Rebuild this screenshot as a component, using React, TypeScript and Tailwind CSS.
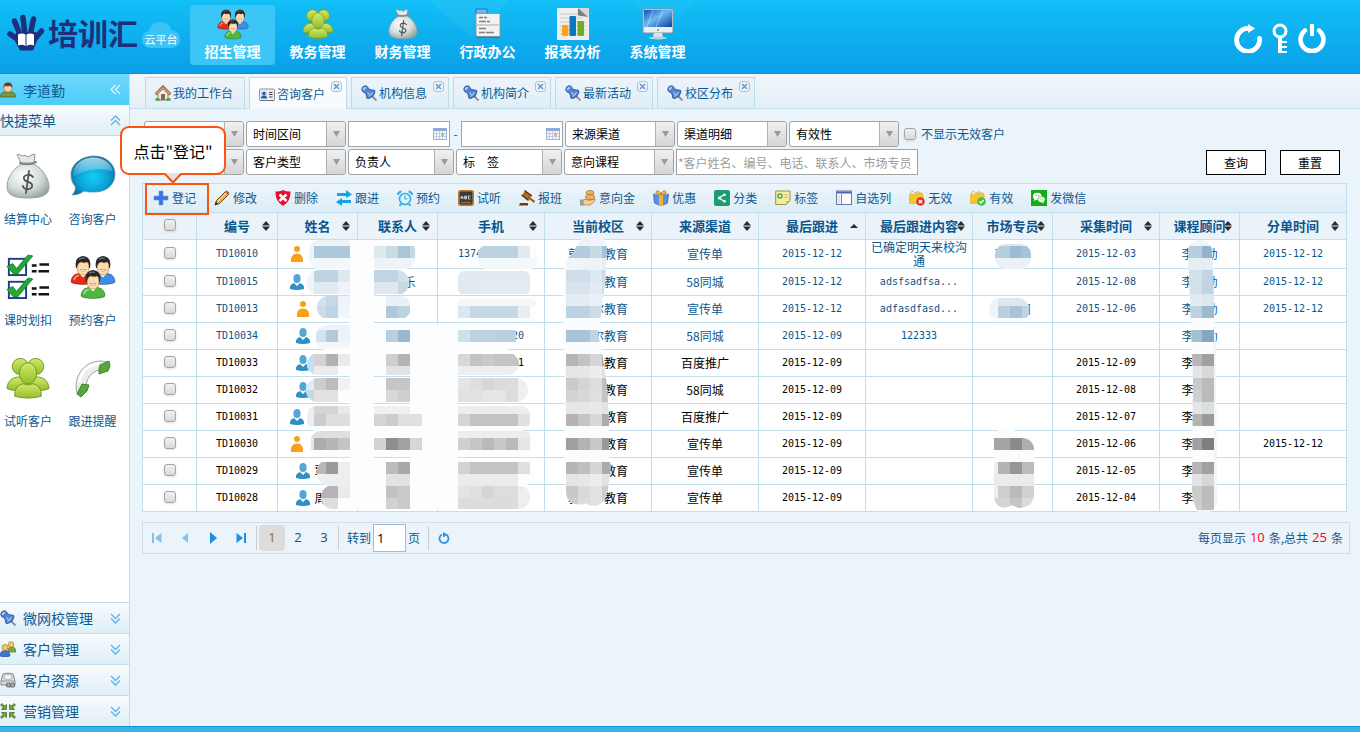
import type { ReactNode } from "react";

const FONT = "font-['Noto_Sans_CJK_SC','Liberation_Sans',sans-serif]";
const MONO = "font-['DejaVu_Sans_Mono',monospace] text-[10px]";

type IconProps = { className?: string };

/* ---------- large icons ---------- */

function MoneyBag({ className }: IconProps) {
  return (
    <svg viewBox="0 0 44 48" className={className} aria-hidden="true">
      <defs>
        <radialGradient id="bag" cx="0.4" cy="0.35" r="0.75">
          <stop offset="0" stopColor="#ffffff" />
          <stop offset="0.55" stopColor="#d5dcda" />
          <stop offset="1" stopColor="#8f9c99" />
        </radialGradient>
      </defs>
      <path d="M15 11 L11 3 Q13 1 16 4 Q19 2 22 5 Q26 2 29 2 L28 11 Z" fill="#e4e8e7" stroke="#8b9896" />
      <path d="M16 12 C6 17 1 27 1 35 C1 43 8 46 22 46 C36 46 43 43 43 35 C43 27 37 17 28 12 Z" fill="url(#bag)" stroke="#96a3a0" />
      <path d="M14 11 Q22 14 30 10" stroke="#7d8987" strokeWidth="2" fill="none" strokeLinecap="round" />
      <path d="M27 25 Q25 22 21 23 Q17 24 18 27 Q19 29 22 30 Q27 31 26 35 Q24 38 20 37 Q17 36 17 34 M23 19 L20 41" stroke="#4c5754" strokeWidth="1.800" fill="none" strokeLinecap="round" />
    </svg>
  );
}

function Head({ x, y, shirt }: { x: number; y: number; shirt: string }) {
  return (
    <g transform={`translate(${x} ${y})`}>
      <path d="M0 26 Q0 19 7 17.500 L17 17.500 Q24 19 24 26 Q23 28 12 28.500 Q1 28 0 26 Z" fill={shirt} stroke="#00000066" strokeWidth="0.800" />
      <path d="M3 24 Q4 20 8 19.500" stroke="#ffffff88" strokeWidth="1.500" fill="none" />
      <path d="M8 17.500 L12 21.500 L16 17.500 Z" fill="#fff" />
      <path d="M5 12 Q3 1 12 0 Q21 1 19 12 Z" fill="#25252b" />
      <path d="M6 11 Q7 6.500 10 6 Q13 7.500 16 6 Q18 7 18 11 Q18 19 12 19 Q6 19 6 11 Z" fill="#fcdcab" stroke="#9a6a34" strokeWidth="0.500" />
      <path d="M9 13.500 Q12 17.500 15 13.500 Z" fill="#fff" stroke="#a86b36" strokeWidth="0.500" />
      <path d="M8 3.500 Q11 1.500 14 2.500" stroke="#74747e" strokeWidth="1.200" fill="none" />
    </g>
  );
}

function PeopleTrio({ className }: IconProps) {
  return (
    <svg viewBox="0 0 46 44" className={className} aria-hidden="true">
      <Head x={1} y={1} shirt="#ea2a12" />
      <Head x={21} y={1} shirt="#3f8be8" />
      <Head x={11} y={15} shirt="#4db83a" />
    </svg>
  );
}

function GreenPeople({ className }: IconProps) {
  return (
    <svg viewBox="0 0 46 44" className={className} aria-hidden="true">
      <defs>
        <linearGradient id="lime" x1="0" y1="0" x2="0" y2="1">
          <stop offset="0" stopColor="#d3e86c" />
          <stop offset="1" stopColor="#93be2b" />
        </linearGradient>
      </defs>
      <g fill="url(#lime)" stroke="#6f991c" strokeWidth="1">
        <circle cx="15" cy="10" r="8.500" />
        <circle cx="31" cy="10" r="8.500" />
        <path d="M1 33 Q2 22 12 21 L34 21 Q44 22 45 33 Q40 36 23 35 Q6 36 1 33 Z" />
        <ellipse cx="23" cy="17" rx="9" ry="11" />
        <path d="M9 41 Q9 29 18 28 Q23 31 28 28 Q37 29 37 41 Q23 45 9 41 Z" />
      </g>
    </svg>
  );
}

function ChatBubble({ className }: IconProps) {
  return (
    <svg viewBox="0 0 46 42" className={className} aria-hidden="true">
      <defs>
        <radialGradient id="chat" cx="0.5" cy="0.55" r="0.6">
          <stop offset="0" stopColor="#14cdf8" />
          <stop offset="0.6" stopColor="#0aa0d4" />
          <stop offset="1" stopColor="#04608f" />
        </radialGradient>
        <linearGradient id="chat-gloss" x1="0" y1="0" x2="0" y2="1">
          <stop offset="0" stopColor="#ffffff" stopOpacity="0.65" />
          <stop offset="1" stopColor="#ffffff" stopOpacity="0.05" />
        </linearGradient>
      </defs>
      <path d="M24 1 C37 1 45 10 45 19 C45 30 36 37 25 37 C20 37 17 37 14 36 C10 39 6 40 2 40 C5 37 6 34 5 31 C2 28 1 24 1 19 C1 10 11 1 24 1 Z" fill="url(#chat)" stroke="#5d93ae" strokeWidth="0.800" />
      <path d="M24 2.500 C34 2.500 42 9 43 17 C34 12 14 14 3 22 C2 10 12 2.500 24 2.500 Z" fill="url(#chat-gloss)" />
    </svg>
  );
}

function CheckList({ className }: IconProps) {
  return (
    <svg viewBox="0 0 46 46" className={className} aria-hidden="true">
      {[0, 24].map((y) => (
        <g key={y} transform={`translate(0 ${y})`}>
          <rect x="3" y="4" width="18" height="17" fill="#fff" stroke="#1c3f86" strokeWidth="2" />
          <path d="M1 12 L7 9 L11 14 L23 0 L28 1 L12 20 L8 20 Z" fill="#23a837" stroke="#0d7a20" strokeWidth="0.800" />
          <path d="M27 11 h5 M35 10 h10 M27 17 h5 M34 17 h11" stroke="#151515" strokeWidth="2.600" />
        </g>
      ))}
    </svg>
  );
}

function Handset({ className }: IconProps) {
  return (
    <svg viewBox="0 0 44 44" className={className} aria-hidden="true">
      <path d="M6 37 C2 22 12 5 30 5 L37 6 L32 14 C24 13 15 20 15 31 L13 38 Z" fill="#eceeee" stroke="#9ea3a3" strokeWidth="1" />
      <path d="M8 26 C10 15 18 8.500 28 7.500" fill="none" stroke="#fff" strokeWidth="3" />
      <path d="M29 9 L38 5 L39 10 L37 15 L28 18 L28 13 Z" fill="#57a83b" stroke="#3d7d28" strokeWidth="0.900" />
      <path d="M11 28 L18 29 L16 35 L10 41 L6 38 Z" fill="#57a83b" stroke="#3d7d28" strokeWidth="0.900" />
    </svg>
  );
}

function MenuDoc({ className }: IconProps) {
  return (
    <svg viewBox="0 0 32 32" className={className} aria-hidden="true">
      <path d="M4 1 h11 v5 h-11 Z" fill="#6fb6ee" stroke="#2372bd" />
      <path d="M4 6 H28 V30 H4 Z" fill="#00000033" />
      <rect x="4" y="5.500" width="24" height="23" fill="#f2f2f2" stroke="#8b8b8b" strokeWidth="0.800" />
      <path d="M5 17 h22" stroke="#a9a9a9" />
      <path d="M7 9.500 h4 M12 9.500 h3 M7 13.500 h7 M15 13.500 h3 M7 20.500 h7 M7 24.500 h6 M14 24.500 h8" stroke="#808080" strokeWidth="1.500" />
    </svg>
  );
}

function ChartDoc({ className }: IconProps) {
  return (
    <svg viewBox="0 0 32 32" className={className} aria-hidden="true">
      <path d="M0 0 H22 L32 9 V32 H0 Z" fill="#eeeeee" />
      <path d="M22 0 H32 V9 Z" fill="#d8d8d8" />
      <path d="M3 6 h18 M3 10 h22 M3 14 h26 M3 18 h26 M3 22 h26 M3 26 h26" stroke="#cccccc" />
      <path d="M21 0 L31 9 L21 7.500 Z" fill="#7e7e7e" />
      <rect x="5" y="17" width="6.500" height="11" rx="1" fill="#f9a61c" />
      <rect x="12.500" y="8" width="6.500" height="20" rx="1" fill="#0b78bd" />
      <rect x="20.500" y="13" width="6.500" height="15" rx="1" fill="#6cae22" />
    </svg>
  );
}

function Monitor({ className }: IconProps) {
  return (
    <svg viewBox="0 0 32 32" className={className} aria-hidden="true">
      <defs>
        <linearGradient id="screen" x1="0" y1="0" x2="1" y2="1">
          <stop offset="0" stopColor="#134fb4" />
          <stop offset="0.450" stopColor="#6eb9f3" />
          <stop offset="1" stopColor="#0b3c9b" />
        </linearGradient>
      </defs>
      <rect x="1" y="1" width="30" height="24" rx="1" fill="#eceff1" stroke="#878f94" />
      <rect x="2" y="2" width="28" height="17" fill="url(#screen)" />
      <path d="M11 2 L5 19 M21 2 L14 19" stroke="#ffffff66" />
      <path d="M12 25 h8 l1 4 h-10 Z" fill="#dfe4e7" />
      <ellipse cx="16" cy="30" rx="9" ry="1.500" fill="#b9d3de" />
      <circle cx="16" cy="22" r="1" fill="#888" />
    </svg>
  );
}

/* ---------- small icons ---------- */

function Svg16({ children }: { children: ReactNode }) {
  return (
    <svg viewBox="0 0 16 16" className="size-4 shrink-0" aria-hidden="true">
      {children}
    </svg>
  );
}

const PinIcon = () => (
  <Svg16>
    <path d="M11 11 L15.500 15.500" stroke="#8b8b8b" strokeWidth="1.800" />
    <path d="M0.800 5 Q0.500 2 3 1 Q6 0 7 2.500 L7.500 4 L11 5 Q14.500 4.500 14 7 Q13 12 8 13.500 Q5 14 5.500 11 L4.500 8 Q2 8 0.800 5 Z" fill="#4f83d3" stroke="#264e99" strokeWidth="0.800" />
    <path d="M2.500 5 Q2.500 3 5 2.500" stroke="#bcd6fa" strokeWidth="1.400" fill="none" />
    <path d="M6.500 7.500 L8.500 9.500 M11.500 7 Q10 10.500 7.500 11.500" stroke="#a9c8f6" strokeWidth="1.100" fill="none" />
  </Svg16>
);
const HouseIcon = () => (
  <Svg16>
    <path d="M3 8 L8 3.500 L13 8 V15 H3 Z" fill="#f1eee9" stroke="#7d7d7d" />
    <path d="M0.500 9.500 L8 2 L15.500 9.500" fill="none" stroke="#8d6a4a" strokeWidth="3" />
    <path d="M1 9 L8 2.500 L15 9" fill="none" stroke="#d9a676" strokeWidth="1.200" />
    <rect x="6" y="9" width="4" height="6" fill="#84684d" />
    <path d="M0.500 14.500 h4 M11.500 14.500 h4" stroke="#4e9e30" strokeWidth="2.500" />
  </Svg16>
);
const CardIcon = () => (
  <Svg16>
    <rect x="0.500" y="3" width="15" height="11.500" rx="1" fill="#eceef1" stroke="#8d949c" />
    <path d="M1 14.500 h14" stroke="#6b7178" />
    <rect x="2" y="5" width="6" height="7.500" fill="#c9dbf0" />
    <circle cx="5" cy="7.500" r="1.700" fill="#2b5ba6" />
    <path d="M2 12.500 Q2 9.500 5 9.500 Q8 9.500 8 12.500 Z" fill="#2b5ba6" />
    <path d="M10 6.500 h3.500 M10 8.500 h3.500 M10 11 h3.500" stroke="#444" />
  </Svg16>
);
const AvatarIcon = () => (
  <Svg16>
    <path d="M0.500 15 Q0.500 10 6 10 h4 Q15.500 10 15.500 15 Z" fill="#7c9a3e" stroke="#44611c" strokeWidth="0.800" />
    <circle cx="8" cy="6" r="4.200" fill="#f6d3a2" stroke="#8d5c2c" strokeWidth="0.600" />
    <path d="M3.800 6 Q3 0.500 8 0.500 Q13 0.500 12.200 6 Q11 3.500 9.500 4 Q6 4.500 5 3.800 Z" fill="#6b3f1d" />
  </Svg16>
);
const UsersIcon = () => (
  <Svg16>
    <path d="M8 10 Q8 6 12 6 Q16 6 16 11 H8 Z" fill="#7fa743" stroke="#4b7420" strokeWidth="0.600" />
    <circle cx="11" cy="3.500" r="2.800" fill="#f6c967" stroke="#a3761c" strokeWidth="0.700" />
    <path d="M0 15 Q0 9.500 5 9.500 Q10 9.500 10 15 Q5 17 0 15 Z" fill="#3e77d2" stroke="#1f4992" strokeWidth="0.600" />
    <circle cx="5" cy="6.500" r="3" fill="#f6c967" stroke="#a3761c" strokeWidth="0.700" />
  </Svg16>
);
const DriveIcon = () => (
  <Svg16>
    <path d="M1 9 L3 2 Q8 0 13 2 L15 9 V13 H1 Z" fill="#dadada" stroke="#888" />
    <ellipse cx="8" cy="5" rx="4" ry="2.500" fill="#f6f6f6" stroke="#aaa" strokeWidth="0.700" />
    <path d="M1 9 h14" stroke="#999" />
    <circle cx="8.500" cy="13" r="2" fill="none" stroke="#666" strokeWidth="1.200" />
    <circle cx="12.500" cy="13" r="2" fill="none" stroke="#666" strokeWidth="1.200" />
  </Svg16>
);
const ArrowsInIcon = () => (
  <Svg16>
    <g fill="#72a03c" stroke="#3f6420" strokeWidth="0.700">
      <path d="M0.500 2 L2 0.500 L4.500 3 L6.500 1.500 V6.500 H1.500 L3 4.500 Z" />
      <path d="M15.500 2 L14 0.500 L11.500 3 L9.500 1.500 V6.500 H14.500 L13 4.500 Z" />
      <path d="M0.500 14 L2 15.500 L4.500 13 L6.500 14.500 V9.500 H1.500 L3 11.500 Z" />
      <path d="M15.500 14 L14 15.500 L11.500 13 L9.500 14.500 V9.500 H14.500 L13 11.500 Z" />
    </g>
  </Svg16>
);
const PlusIcon = () => (
  <Svg16>
    <path d="M6 1 h4 v5 h5 v4 h-5 v5 h-4 v-5 h-5 v-4 h5 Z" fill="#3c74d8" stroke="#6a9aea" strokeWidth="0.600" />
  </Svg16>
);
const PencilIcon = () => (
  <Svg16>
    <path d="M1 15 L2.500 10.500 L11.500 1.500 L14.500 4.500 L5.500 13.500 Z" fill="#f4b430" stroke="#4c3414" strokeWidth="0.900" />
    <path d="M4 11 L12 3" stroke="#fbe08f" />
    <path d="M11.500 1.500 L13 0.500 L15.500 3 L14.500 4.500 Z" fill="#c6504a" />
    <path d="M1 15 L2 12 L4 14 Z" fill="#222" />
  </Svg16>
);
const DeleteIcon = () => (
  <Svg16>
    <path d="M0.500 1.500 Q4 2 8 0 Q12 2 15.500 1.500 Q16 11 8 16 Q0 11 0.500 1.500 Z" fill="#df1030" />
    <path d="M4.500 4.500 L11.500 11 M11.500 4.500 L4.500 11" stroke="#fff" strokeWidth="2.600" />
  </Svg16>
);
const SwapIcon = () => (
  <Svg16>
    <path d="M1 3 H10 V0 L16 4.500 L10 8 V6 H1 Z" fill="#12a4ea" />
    <path d="M15 10 H6 V8 L0 12 L6 16 V13 H15 Z" fill="#12a4ea" />
  </Svg16>
);
const AlarmIcon = () => (
  <Svg16>
    <circle cx="8" cy="9" r="5.500" fill="#dff3fb" stroke="#35ade2" strokeWidth="1.600" />
    <path d="M8 5.500 V9 H10.500" stroke="#35ade2" strokeWidth="1.200" fill="none" />
    <path d="M1 5 Q1 2 4.500 1.500 M15 5 Q15 2 11.500 1.500 M4 14 L2.500 16 M12 14 L13.500 16" stroke="#35ade2" strokeWidth="2" fill="none" />
  </Svg16>
);
const BoardIcon = () => (
  <Svg16>
    <rect x="0.700" y="0.700" width="14.600" height="14.600" rx="2.500" fill="#3a3a3a" stroke="#bb7d33" strokeWidth="1.800" />
    <path d="M3 9 V7 L4 6 L5 7 V9 M3 8 H5 M6.700 6 V9 H8.500 V6 H6.700 M6.700 7.500 H8.500 M12.500 6 H10.500 V9 H12.500" stroke="#eee" strokeWidth="0.800" fill="none" />
    <path d="M3 12.500 h10" stroke="#9a6a2e" strokeWidth="1.500" />
  </Svg16>
);
const GavelIcon = () => (
  <Svg16>
    <path d="M6.500 1 L12 5.500 L9 10 L3.500 5.500 Z" fill="#b56a1c" stroke="#7c420b" strokeWidth="0.800" />
    <path d="M9 7 L15.500 12" stroke="#a35b14" strokeWidth="2.200" />
    <path d="M1 13 H9 V15.500 H0 Z" fill="#6c3b0e" />
    <path d="M5.500 0.500 L13 6 M2.500 5 L9.500 10.500" stroke="#5e3008" strokeWidth="1.200" />
  </Svg16>
);
const CoinHandIcon = () => (
  <Svg16>
    <ellipse cx="10" cy="3" rx="4" ry="2.500" fill="#e9b163" stroke="#a8722a" strokeWidth="0.800" />
    <ellipse cx="10" cy="7" rx="4.500" ry="2.500" fill="#e9b163" stroke="#a8722a" strokeWidth="0.800" />
    <path d="M3 10 Q6 8 9 10.500 L15 9 Q16 11 10 15 L3 15 Z" fill="#f3cf98" stroke="#b27b32" strokeWidth="0.800" />
    <rect x="0" y="9.500" width="3" height="6" fill="#9c9c9c" />
  </Svg16>
);
const GiftIcon = () => (
  <Svg16>
    <path d="M0.500 4 L8 6 L15.500 4 L14.500 13 L8 16 L1.500 13 Z" fill="#5a8eea" stroke="#2c58b0" strokeWidth="0.700" />
    <path d="M0.500 4 L8 2 L15.500 4 L8 6 Z" fill="#8fb6f5" />
    <path d="M6 5.500 L10 5.500 V15.500 L8 16 L6 15.500 Z" fill="#f5b427" />
    <path d="M8 4.500 Q2 4.500 3 1.500 Q6 -1 8 4.500 Q10 -1 13 1.500 Q14 4.500 8 4.500 Z" fill="#f7bb35" stroke="#c17d0c" strokeWidth="0.800" />
  </Svg16>
);
const ShareIcon = () => (
  <Svg16>
    <rect width="16" height="16" rx="2" fill="#1e9d74" />
    <path d="M10.500 4.500 L5 8 L10.500 11.500" stroke="#fff" strokeWidth="1.200" fill="none" />
    <circle cx="5.500" cy="8" r="1.600" fill="#fff" />
    <circle cx="10.500" cy="4.700" r="1.300" fill="#fff" />
    <circle cx="10.500" cy="11.300" r="1.300" fill="#fff" />
  </Svg16>
);
const NoteIcon = () => (
  <Svg16>
    <path d="M0.700 1 H15 V11 L11 14.500 H0.700 Z" fill="#f4eda2" stroke="#9b9440" />
    <path d="M15 11 H11 V14.500 Z" fill="#c5bb5a" />
    <circle cx="5" cy="6" r="2.800" fill="#4f9f3b" />
    <path d="M5 4.500 V7.500 M3.500 6 H6.500" stroke="#fff" />
    <path d="M9.500 5 h3 M9.500 7.500 h3" stroke="#bdb35f" />
  </Svg16>
);
const ColumnsIcon = () => (
  <Svg16>
    <rect x="0.500" y="1" width="15" height="13.500" fill="#fdfdfe" stroke="#6b76a6" />
    <rect x="1" y="1.500" width="14" height="2" fill="#4a66c0" />
    <path d="M5.500 4 V14" stroke="#7f8cba" />
    <path d="M3 5 v8.500" stroke="#dfe4f2" strokeWidth="3" />
  </Svg16>
);
const Folder = () => (
  <>
    <path d="M1 4 L3 1 L6 3 L9 1.500 L12 4" fill="#f2f2f2" stroke="#aaa" strokeWidth="0.700" />
    <path d="M0.500 5.500 Q0.500 4 2 4 L5 4.500 L7 3 H12.500 Q14 3 14 5 V13.500 H0.500 Z" fill="#f7c62a" stroke="#e0a90e" strokeWidth="0.600" />
  </>
);
const InvalidIcon = () => (
  <Svg16>
    <Folder />
    <circle cx="11.500" cy="11.500" r="4.300" fill="#e03427" />
    <path d="M10 10 L13 13 M13 10 L10 13" stroke="#fff" strokeWidth="1.500" />
  </Svg16>
);
const ValidIcon = () => (
  <Svg16>
    <Folder />
    <circle cx="11.500" cy="11.500" r="4.300" fill="#41c045" />
    <path d="M9.500 11.500 L11 13 L13.700 10" stroke="#fff" strokeWidth="1.500" fill="none" />
  </Svg16>
);
const WechatIcon = () => (
  <Svg16>
    <rect width="16" height="16" fill="#10ae15" />
    <ellipse cx="6.300" cy="6.300" rx="4.300" ry="3.500" fill="#fff" />
    <path d="M3.500 8.500 L3 11 L6 9.500 Z" fill="#fff" />
    <ellipse cx="10.500" cy="9.500" rx="3.700" ry="3" fill="#fff" stroke="#10ae15" strokeWidth="0.600" />
    <path d="M12 11.500 L13 13.500 L10.500 12.300 Z" fill="#fff" />
    <circle cx="5" cy="5.500" r="0.600" fill="#10ae15" />
    <circle cx="7.700" cy="5.500" r="0.600" fill="#10ae15" />
    <circle cx="9.300" cy="9" r="0.500" fill="#10ae15" />
    <circle cx="11.700" cy="9" r="0.500" fill="#10ae15" />
  </Svg16>
);

function Chevrons({ dir, light }: { dir: "left" | "up" | "down"; light?: boolean }) {
  const d = {
    left: "M5.500 1 L1 5.500 L5.500 10 M10 1 L5.500 5.500 L10 10",
    up: "M1 5.500 L5.500 1 L10 5.500 M1 10 L5.500 5.500 L10 10",
    down: "M1 1 L5.500 5.500 L10 1 M1 5.500 L5.500 10 L10 5.500",
  }[dir];
  return (
    <svg viewBox="0 0 11 11" className="size-[11px]" aria-hidden="true">
      <path d={d} fill="none" stroke={light ? "#d8f4ff" : "#5cb3e6"} strokeWidth="1.300" />
    </svg>
  );
}

/* ---------- header ---------- */

const nav: [string, ReactNode][] = [
  ["招生管理", <PeopleTrio className="h-8 w-8" />],
  ["教务管理", <GreenPeople className="h-8 w-8" />],
  ["财务管理", <MoneyBag className="h-8 w-8" />],
  ["行政办公", <MenuDoc className="size-8" />],
  ["报表分析", <ChartDoc className="size-8" />],
  ["系统管理", <Monitor className="size-8" />],
];

function Header() {
  return (
    <header className="relative flex h-[74px] items-start border-b border-[#0b8fdc] bg-gradient-to-b from-[#12bff6] to-[#0b9fe8]">
      <svg viewBox="0 0 300 73" className="absolute top-0 left-[400px] h-[73px] w-[300px]" aria-hidden="true">
        <path d="M28 0 H110 L72 38 Z" fill="#ffffff" opacity="0.05" />
        <path d="M228 0 H300 L262 28 Z" fill="#ffffff" opacity="0.04" />
      </svg>
      <div className="flex w-[190px] items-center pl-[7px] pt-3">
        <svg viewBox="0 0 38 38" className="size-[38px]" aria-hidden="true">
          <g stroke="#1e2f7e" strokeLinecap="round" fill="none">
            <path d="M3 21 L13 28" strokeWidth="5.500" />
            <path d="M7.500 8 L14 24" strokeWidth="5.500" />
            <path d="M16 4.500 L18 22" strokeWidth="5.500" />
            <path d="M26.500 6 L23 23" strokeWidth="5.500" />
            <path d="M34.500 18 L26 28" strokeWidth="5.500" />
          </g>
          <path d="M9 19 H29 L30 28 L26 37.500 H13 L8 28 Z" fill="#1e2f7e" />
          <path d="M11 21.500 Q15 19.500 18.500 21.500 V33 Q15 31 11 32.500 Z" fill="#fff" />
          <path d="M27 21.500 Q23 19.500 19.500 21.500 V33 Q23 31 27 32.500 Z" fill="#fff" />
        </svg>
        <span className="ml-[3px] text-[30px] leading-10 font-bold text-[#1e2f7e]">培训汇</span>
        <span className="relative ml-1 mt-1.5 flex h-[26px] w-[38px] items-end justify-center">
          <svg viewBox="0 0 38 26" className="absolute inset-0" aria-hidden="true">
            <path d="M8 26 Q0 25 0 17 Q0 10 7 9 Q9 0 18 0 Q27 0 29 8 Q38 9 38 17 Q38 25 30 26 Z" fill="#3cc2f5" />
          </svg>
          <span className="relative text-[11px] leading-[18px] text-white">云平台</span>
        </span>
      </div>
      <nav className="relative flex pt-[5px]">
        {nav.map(([label, icon], i) => (
          <a
            key={label}
            href="#"
            className={`flex h-[60px] w-[85px] flex-col items-center rounded pt-[3px] text-sm leading-[23px] font-bold text-white ${i === 0 ? "bg-[#3cc6f8]" : ""}`}
          >
            {icon}
            {label}
          </a>
        ))}
      </nav>
      <div className="relative ml-auto flex gap-[9px] pt-[23px] pr-[33px]">
        <button aria-label="刷新">
          <svg viewBox="0 0 30 30" className="size-[30px]" aria-hidden="true">
            <path d="M16 5.500 A11.500 11.500 0 1 0 26.500 15.500" fill="none" stroke="#fff" strokeWidth="4.800" strokeLinecap="round" />
            <path d="M15 1 L22 5.500 L15 10 Z" fill="#fff" />
          </svg>
        </button>
        <button aria-label="修改密码">
          <svg viewBox="0 0 16 30" className="h-[30px] w-4" aria-hidden="true">
            <circle cx="8" cy="8" r="6" fill="none" stroke="#fff" strokeWidth="3" />
            <path d="M8 14 V30" stroke="#fff" strokeWidth="4" />
            <path d="M9 19 H15 M9 24 H15 M9 29 H15" stroke="#fff" strokeWidth="2" />
          </svg>
        </button>
        <button aria-label="退出">
          <svg viewBox="0 0 30 30" className="size-[30px]" aria-hidden="true">
            <path d="M8 7.500 A11.500 11.500 0 1 0 22 7.500" fill="none" stroke="#fff" strokeWidth="4.500" strokeLinecap="round" />
            <path d="M15 1 V13" stroke="#fff" strokeWidth="4" />
          </svg>
        </button>
      </div>
    </header>
  );
}

/* ---------- sidebar ---------- */

const shortcuts: [string, ReactNode][] = [
  ["结算中心", <MoneyBag className="h-[48px] w-11" />],
  ["咨询客户", <ChatBubble className="h-[42px] w-[46px]" />],
  ["课时划扣", <CheckList className="h-[48px] w-11" />],
  ["预约客户", <PeopleTrio className="h-[48px] w-[46px]" />],
  ["试听客户", <GreenPeople className="h-[48px] w-11" />],
  ["跟进提醒", <Handset className="h-[44px] w-11" />],
];

const sections: [string, ReactNode][] = [
  ["微网校管理", <PinIcon />],
  ["客户管理", <UsersIcon />],
  ["客户资源", <DriveIcon />],
  ["营销管理", <ArrowsInIcon />],
];

function Sidebar() {
  return (
    <aside className="flex w-[130px] shrink-0 flex-col border-r border-[#c3dfee] bg-white text-sm text-[#0b5a93]">
      <div className="flex h-[31px] items-center gap-[7px] bg-gradient-to-b from-[#6fd8fd] to-[#4cccf8] pr-2">
        <AvatarIcon />
        <span>李道勤</span>
        <button aria-label="收起" className="ml-auto">
          <Chevrons dir="left" light />
        </button>
      </div>
      <button className="flex h-[31px] items-center border-b border-[#c0deec] bg-gradient-to-b from-[#fafcfd] to-[#deeef7] pr-2">
        <span>快捷菜单</span>
        <span className="ml-auto">
          <Chevrons dir="up" />
        </span>
      </button>
      <div className="grid flex-1 grid-cols-[56px_73px] content-start gap-y-[15px] pt-4 text-xs">
        {shortcuts.map(([label, icon]) => (
          <a key={label} href="#" className="flex h-[86px] flex-col items-center">
            <span className="flex h-[48px] items-center">{icon}</span>
            <span className="leading-[38px]">{label}</span>
          </a>
        ))}
      </div>
      {sections.map(([label, icon]) => (
        <button
          key={label}
          className="flex h-[31px] items-center gap-[7px] border-t border-[#c0deec] bg-gradient-to-b from-[#f8fbfd] to-[#deeef7] pr-2"
        >
          {icon}
          <span>{label}</span>
          <span className="ml-auto">
            <Chevrons dir="down" />
          </span>
        </button>
      ))}
    </aside>
  );
}

/* ---------- tabs ---------- */

const tabs: [string, ReactNode][] = [
  ["我的工作台", <HouseIcon />],
  ["咨询客户", <CardIcon />],
  ["机构信息", <PinIcon />],
  ["机构简介", <PinIcon />],
  ["最新活动", <PinIcon />],
  ["校区分布", <PinIcon />],
];

function Tabs() {
  return (
    <div role="tablist" className="flex h-[35px] items-end gap-1 border-b border-[#c0deec] bg-gradient-to-b from-[#f0f5fa] to-[#e3f0f7] pl-[15px]">
      {tabs.map(([label, icon], i) => (
        <div
          key={label}
          role="tab"
          aria-selected={i === 1}
          className={`relative flex items-center gap-0.5 border border-b-0 border-[#bcdbe8] pl-[9px] text-xs text-[#0b5a93] ${
            i === 0 ? "w-[100px]" : "w-[98px]"
          } ${i === 1 ? "-mb-px h-8 bg-gradient-to-b from-white to-[#f4f9fd]" : "h-[31px] bg-gradient-to-b from-[#edf4fa] to-[#dfeef6]"}`}
        >
          {icon}
          <span>{label}</span>
          {i > 0 && (
            <button aria-label={`关闭${label}`} className="absolute top-[3px] right-1 flex size-[11px] items-center justify-center rounded-[3px] border border-[#a3c4e2] bg-[#eaf4fc]">
              <svg viewBox="0 0 7 7" className="size-[7px]" aria-hidden="true">
                <path d="M1 1 L6 6 M6 1 L1 6" stroke="#6f99c4" strokeWidth="1.600" />
              </svg>
            </button>
          )}
        </div>
      ))}
    </div>
  );
}

/* ---------- filters ---------- */

function Combo({ label, width }: { label: string; width: string }) {
  return (
    <span className={`relative flex h-[26px] ${width}`}>
      <select aria-label={label || "客户状态"} className="w-full appearance-none rounded-[3px] border border-[#a3a3a3] bg-white pl-1.5 text-xs text-black">
        <option>{label}</option>
      </select>
      <span className="pointer-events-none absolute inset-y-px right-px flex w-[19px] items-center justify-center rounded-r-[2px] border-l border-[#b0b0b0] bg-gradient-to-b from-[#f1f1f1] to-[#d4d4d4]">
        <svg viewBox="0 0 7 6" className="h-1.5 w-[7px]" aria-hidden="true">
          <path d="M0 0 H7 L3.500 6 Z" fill="#9a9a9a" />
        </svg>
      </span>
    </span>
  );
}

function DateBox({ label }: { label: string }) {
  return (
    <span className="relative flex h-[26px] w-[102px]">
      <input aria-label={label} className="w-full border border-[#a3a3a3] bg-white px-1.5 text-xs" />
      <svg viewBox="0 0 14 12" className="pointer-events-none absolute top-[7px] right-[3px] h-3 w-3.5" aria-hidden="true">
        <rect x="0.500" y="0.500" width="13" height="11" fill="#f4f8fd" stroke="#9db5d4" />
        <rect x="0" y="0" width="14" height="3" fill="#8facd8" />
        <path d="M3.500 3 V11 M6.500 3 V11 M9.500 3 V11 M1 5.500 H13 M1 8.500 H13" stroke="#b3c5de" strokeWidth="0.800" />
        <rect x="8" y="5" width="3" height="3" fill="#f0a48c" />
      </svg>
    </span>
  );
}

const CHECKBOX =
  "size-3 appearance-none rounded-[3px] border border-[#a4a4a4] bg-gradient-to-b from-[#f1f1f1] to-[#d9d9d9] shadow-sm checked:bg-[#3c74d8]";

function Filters() {
  return (
    <form className="flex items-end justify-between pt-3 pr-[10px] pl-[2px]">
      <div className="flex flex-col gap-0.5">
        <div className="flex items-center gap-0.5">
          <Combo label="" width="w-[100px]" />
          <Combo label="时间区间" width="w-[100px]" />
          <DateBox label="开始日期" />
          <span className="w-[7px] text-center text-xs text-[#0b5a93]">-</span>
          <DateBox label="结束日期" />
          <Combo label="来源渠道" width="w-[110px]" />
          <Combo label="渠道明细" width="w-[110px]" />
          <Combo label="有效性" width="w-[110px]" />
          <label className="ml-[3px] flex items-center gap-[5px] text-xs text-[#0b5a93]">
            <input type="checkbox" className={CHECKBOX} />
            不显示无效客户
          </label>
        </div>
        <div className="flex items-center gap-0.5">
          <Combo label="" width="w-[100px]" />
          <Combo label="客户类型" width="w-[100px]" />
          <Combo label="负责人" width="w-[106px]" />
          <Combo label="标　签" width="w-[106px]" />
          <Combo label="意向课程" width="w-[110px]" />
          <input
            aria-label="搜索"
            placeholder="*客户姓名、编号、电话、联系人、市场专员"
            className="h-[26px] w-[242px] border border-[#a3a3a3] bg-white px-px text-xs placeholder:text-[#9b9b9b]"
          />
        </div>
      </div>
      <div className="flex gap-3.5">
        <button type="button" className="h-[25px] w-[60px] border border-black bg-white text-xs text-black">
          查询
        </button>
        <button type="button" className="h-[25px] w-[60px] border border-black bg-white text-xs text-black">
          重置
        </button>
      </div>
    </form>
  );
}

/* ---------- toolbar ---------- */

const actions: [string, ReactNode][] = [
  ["登记", <PlusIcon />],
  ["修改", <PencilIcon />],
  ["删除", <DeleteIcon />],
  ["跟进", <SwapIcon />],
  ["预约", <AlarmIcon />],
  ["试听", <BoardIcon />],
  ["报班", <GavelIcon />],
  ["意向金", <CoinHandIcon />],
  ["优惠", <GiftIcon />],
  ["分类", <ShareIcon />],
  ["标签", <NoteIcon />],
  ["自选列", <ColumnsIcon />],
  ["无效", <InvalidIcon />],
  ["有效", <ValidIcon />],
  ["发微信", <WechatIcon />],
];

function Callout() {
  return (
    <>
      <span className="pointer-events-none absolute -top-1.5 -left-2 z-20 h-8 w-16 border-2 border-[#fb5310]" />
      <span className="pointer-events-none absolute bottom-8 -left-[33px] z-20 flex h-[49px] w-[106px] items-center justify-center rounded-[9px] border-2 border-[#fb5310] bg-white text-base whitespace-nowrap text-black">
        点击"登记"
        <svg viewBox="0 0 18 11" className="absolute -bottom-[11px] left-[42px] h-[11px] w-[18px]" aria-hidden="true">
          <path d="M1 0 L9 9 L17 0 Z" fill="#dfe3e6" />
          <path d="M1 1 L9 9.500 L17 1" fill="none" stroke="#fb5310" strokeWidth="2" />
        </svg>
      </span>
    </>
  );
}

function Toolbar() {
  return (
    <div className="mr-[3px] flex h-[29px] items-center gap-[18px] border border-b-0 border-[#c0deec] bg-gradient-to-b from-[#edf5fb] to-[#dcedf6] pl-[10px]">
      {actions.map(([label, icon], i) => (
        <button key={label} className="relative flex items-center gap-[3px] text-xs leading-[18px] whitespace-nowrap text-[#0b5a93]">
          {icon}
          {label}
          {i === 0 && <Callout />}
        </button>
      ))}
    </div>
  );
}

/* ---------- table ---------- */

const columns: [string, string, "both" | "up"][] = [
  ["编号", "w-[81px]", "both"],
  ["姓名", "w-[80px]", "both"],
  ["联系人", "w-[80px]", "both"],
  ["手机", "w-[107px]", "both"],
  ["当前校区", "w-[107px]", "both"],
  ["来源渠道", "w-[107px]", "both"],
  ["最后跟进", "w-[107px]", "up"],
  ["最后跟进内容", "w-[107px]", "both"],
  ["市场专员", "w-[80px]", "both"],
  ["采集时间", "w-[107px]", "both"],
  ["课程顾问", "w-[80px]", "both"],
  ["分单时间", "w-[107px]", "both"],
];

type Row = {
  id: string;
  color: string;
  name: string;
  contact: string;
  phone: string;
  school: string;
  source: string;
  last: string;
  note: string;
  agent: string;
  collected: string;
  assigned: string;
};

const O = "#f9a01b";
const B = "#2f8fc6";
const rows: Row[] = [
  { id: "TD10010", color: O, name: "　　　", contact: "　　明", phone: "1374       ", school: "郭　　教育", source: "宣传单", last: "2015-12-12", note: "已确定明天来校沟通", agent: "丁　明", collected: "2015-12-03", assigned: "2015-12-12" },
  { id: "TD10015", color: B, name: "　　　", contact: "　　乐", phone: "", school: "　　　教育", source: "58同城", last: "2015-12-12", note: "adsfsadfsa...", agent: "", collected: "2015-12-08", assigned: "2015-12-12" },
  { id: "TD10013", color: O, name: "　　", contact: "", phone: "", school: "　　尔教育", source: "宣传单", last: "2015-12-12", note: "adfasdfasd...", agent: "　　明", collected: "2015-12-06", assigned: "2015-12-12" },
  { id: "TD10034", color: B, name: "　　", contact: "", phone: "         20", school: "　　尔教育", source: "58同城", last: "2015-12-09", note: "122333", agent: "", collected: "", assigned: "" },
  { id: "TD10033", color: B, name: "　　", contact: "", phone: "          1", school: "　　　教育", source: "百度推广", last: "2015-12-09", note: "", agent: "", collected: "2015-12-09", assigned: "" },
  { id: "TD10032", color: B, name: "　　", contact: "", phone: "", school: "　　　教育", source: "58同城", last: "2015-12-09", note: "", agent: "", collected: "2015-12-08", assigned: "" },
  { id: "TD10031", color: B, name: "　　　", contact: "", phone: "", school: "　　　教育", source: "百度推广", last: "2015-12-09", note: "", agent: "", collected: "2015-12-07", assigned: "" },
  { id: "TD10030", color: O, name: "　　　", contact: "", phone: "", school: "　　　教育", source: "宣传单", last: "2015-12-09", note: "", agent: "", collected: "2015-12-06", assigned: "2015-12-12" },
  { id: "TD10029", color: B, name: "覃　", contact: "", phone: "", school: "　　　教育", source: "宣传单", last: "2015-12-09", note: "", agent: "", collected: "2015-12-05", assigned: "" },
  { id: "TD10028", color: B, name: "周　", contact: "", phone: "", school: "郭　　教育", source: "宣传单", last: "2015-12-09", note: "", agent: "", collected: "2015-12-04", assigned: "" },
];

function PersonIcon({ color }: { color: string }) {
  return (
    <svg viewBox="0 0 14 16" className="h-4 w-3.5 shrink-0" aria-hidden="true">
      {color === O ? (
        <>
          <circle cx="7" cy="3" r="3" fill={color} />
          <path d="M1 16 V12.500 Q2 7.500 7 7.500 Q12 7.500 13 12.500 V16 Z" fill={color} />
        </>
      ) : (
        <>
          <ellipse cx="7" cy="4.500" rx="3.600" ry="4.500" fill="#52a7d6" />
          <path d="M0 15 V12.500 Q1 9.500 4 9 L7 12 L10 9 Q13 9.500 14 12.500 V15 Q7 17 0 15 Z" fill={color} />
        </>
      )}
    </svg>
  );
}

/* Pixelated privacy blocks drawn over personal data: [y, height, [x, width, colour][]] */
type Band = [number, number, [number, number, string][]];

const personBlobs: [number, number, number, number, number][] = [
  [309, 240, 106, 29, 10], [307, 270, 102, 25, 12], [317, 296, 94, 23, 11], [316, 325, 200, 25, 10],
  [307, 353, 212, 22, 11], [306, 378, 222, 24, 12], [307, 406, 223, 25, 9], [311, 431, 222, 26, 9],
  [317, 460, 218, 25, 11], [321, 485, 209, 24, 12], [478, 245, 60, 24, 9], [458, 271, 72, 24, 6], [457, 299, 80, 23, 6],
  [350, 244, 24, 260, 0], [410, 330, 48, 174, 0],
];
const personBands: Band[] = [
  [240, 6, [[309, 41, "#edf4f8"]]],
  [246, 12, [[309, 5, "#edf4f8"], [314, 36, "#adc8da"], [374, 12, "#dde8ef"], [386, 12, "#cbdbe6"], [398, 12, "#a9c6d9"], [410, 5, "#c5d8e2"], [478, 40, "#bbd2e0"], [518, 12, "#e1eaf2"]]],
  [258, 12, [[309, 41, "#f3f7fa"], [374, 41, "#eef3f8"], [478, 60, "#f3f8fa"]]],
  [270, 12, [[307, 7, "#eef4f8"], [314, 24, "#bfd3e1"], [338, 12, "#dde8f0"], [374, 24, "#c0d5e3"], [398, 11, "#d3e0ea"], [458, 72, "#e1ebf1"]]],
  [282, 12, [[307, 7, "#eef4f8"], [314, 24, "#e0eaf1"], [338, 12, "#edf3f8"], [374, 24, "#dfe8f0"], [398, 11, "#c8d8e2"], [458, 24, "#dfe9f0"], [482, 48, "#e3ecf2"]]],
  [296, 10, [[317, 9, "#d3e1eb"], [326, 12, "#c6d8e4"], [338, 12, "#eef4fa"], [386, 24, "#e9f1f6"], [457, 80, "#f3f7fa"]]],
  [306, 12, [[317, 9, "#cbdce7"], [326, 12, "#bfd4e2"], [338, 12, "#f0f5fa"], [386, 12, "#afc8da"], [398, 12, "#bdd3e0"], [458, 12, "#dae7ef"], [470, 48, "#c5d8e3"], [518, 12, "#e8eff4"]]],
  [325, 5, [[316, 34, "#edf3f7"]]],
  [330, 12, [[316, 10, "#d5e3ec"], [326, 12, "#b4cadb"], [338, 12, "#ebf3f8"], [386, 12, "#b6d0e1"], [398, 12, "#9ab9d0"], [458, 12, "#d0e0ea"], [470, 24, "#bdd3e2"], [494, 22, "#b9d0df"]]],
  [342, 6, [[316, 34, "#f3f7fa"]]],
  [354, 12, [[307, 7, "#c5e1ef"], [314, 12, "#d3d3d4"], [326, 12, "#b1b1b1"], [338, 12, "#ebebec"], [386, 12, "#cfcfcf"], [398, 12, "#b4b4b4"], [458, 12, "#d8d8d8"], [470, 12, "#c3c3c4"], [482, 12, "#cacaca"], [494, 25, "#c4c4c4"]]],
  [366, 12, [[307, 7, "#c5e1ef"], [314, 24, "#ebebec"], [386, 24, "#e3e3e4"], [458, 61, "#eeeeef"]]],
  [378, 12, [[306, 8, "#dbecf6"], [314, 12, "#cdcdcd"], [326, 12, "#bcbcbc"], [338, 12, "#f2f2f3"], [386, 24, "#c6c6c6"], [458, 12, "#e5e5e5"], [470, 12, "#dedede"], [482, 12, "#d6d6d6"], [494, 24, "#dcdcdc"], [518, 10, "#efefef"]]],
  [390, 12, [[306, 8, "#bcdcec"], [314, 24, "#e1e1e2"], [386, 12, "#d8d8d9"], [398, 12, "#cfcfcf"], [458, 24, "#e1e1e1"], [482, 24, "#e5e5e5"], [506, 12, "#dcdcdc"], [518, 10, "#efefef"]]],
  [406, 8, [[307, 7, "#e8eef5"], [314, 24, "#d5d5d6"], [338, 12, "#e9e9ea"], [374, 36, "#eff0f2"], [458, 72, "#ededee"]]],
  [414, 12, [[307, 7, "#e8eef5"], [314, 12, "#cccccd"], [326, 24, "#dededf"], [374, 12, "#d5d5d6"], [386, 12, "#cccccc"], [398, 24, "#e0e0e1"], [458, 12, "#d5d5d5"], [470, 48, "#c3c3c3"], [518, 12, "#e0e0e0"]]],
  [431, 7, [[311, 39, "#dedee0"], [458, 72, "#ededee"]]],
  [438, 12, [[311, 3, "#e5e5e6"], [314, 12, "#acacac"], [326, 12, "#b6b6b6"], [338, 12, "#c4c4c4"], [374, 12, "#d2d2d2"], [386, 12, "#8e8e8e"], [398, 12, "#a1a1a1"], [410, 12, "#d7d7d7"], [458, 12, "#d0d0d0"], [470, 12, "#c6c6c6"], [482, 12, "#bababa"], [494, 12, "#c8c8c8"], [506, 12, "#bababa"], [518, 12, "#e6e6e6"]]],
  [462, 12, [[317, 9, "#b8b8b8"], [326, 12, "#9a9a9a"], [338, 12, "#eeeeee"], [386, 12, "#bcbcbc"], [398, 12, "#a8a8a8"], [458, 12, "#d2d2d2"], [470, 48, "#c4c4c4"], [518, 12, "#e0e0e0"]]],
  [474, 12, [[317, 33, "#eceff2"], [386, 24, "#e2e2e4"], [458, 60, "#ebebec"]]],
  [486, 12, [[321, 17, "#b5b5b5"], [338, 12, "#ebebec"], [386, 12, "#c2c2c2"], [398, 12, "#cacaca"], [458, 12, "#e4e4e4"], [470, 12, "#dfdfdf"], [482, 12, "#d5d5d5"], [494, 24, "#dddddd"], [518, 12, "#eeeeee"]]],
  [498, 12, [[321, 17, "#dededf"], [386, 12, "#d2d2d2"], [398, 12, "#cacaca"], [458, 60, "#dcdcdd"], [518, 12, "#eeeeee"]]],
];

const schoolBands: [number, string, string, string, string][] = [
  [234, "#eaf2f7", "#eaf2f7", "#eef4f9", "#eef4f9"],
  [246, "#b4cddd", "#b4cddd", "#c8dae5", "#a4c2d7"],
  [258, "#f0f6f9", "#edf4f8", "#edf4f8", "#e6eff5"],
  [270, "#cfdeea", "#cfdeea", "#dde8f1", "#cbdce7"],
  [282, "#d8e4ed", "#d8e4ed", "#e3ecf3", "#cfdfe9"],
  [294, "#e4ecf4", "#e4ecf4", "#e9f0f6", "#e2ebf2"],
  [306, "#bed3e1", "#bed3e1", "#cddde8", "#d5e3ec"],
  [318, "#fbfcfe", "#fbfcfe", "#fbfcfe", "#fbfcfe"],
  [330, "#a9c4d8", "#a9c4d8", "#c0d4e2", "#ffffff00"],
  [342, "#fbfcfe", "#fbfcfe", "#fbfcfe", "#fbfcfe"],
  [354, "#b5b5b6", "#c3c3c4", "#d5d5d6", "#aaaaaa"],
  [366, "#e5e5e7", "#e7e7e9", "#ededee", "#e2e2e3"],
  [378, "#cacaca", "#d5d5d5", "#dedede", "#c0c0c0"],
  [390, "#d3d3d3", "#d8d8d8", "#e0e0e0", "#c4c4c4"],
  [402, "#e5e6e7", "#e6e7e8", "#e9e9ea", "#e2e3e4"],
  [414, "#b4b4b4", "#c5c5c5", "#d8d8d8", "#acacac"],
  [426, "#fbfcfe", "#fbfcfe", "#fbfcfe", "#fbfcfe"],
  [438, "#9f9f9f", "#b3b3b3", "#c8c8c8", "#999999"],
  [450, "#fbfcfe", "#fbfcfe", "#fbfcfe", "#fbfcfe"],
  [462, "#b6b6b6", "#bfbfbf", "#d6d6d6", "#ababab"],
  [474, "#e3e4e6", "#e6e7e9", "#ebecee", "#e0e1e3"],
  [486, "#c8c8c8", "#dadada", "#e2e2e2", "#cccccc"],
  [498, "#cdcdcd", "#dcdcdc", "#e2e2e2", "#cfcfcf"],
];

const advisorBands: [number, string, string][] = [
  [240, "#eef5f9", "#eef5f9"], [246, "#b5cddd", "#92b5cd"], [258, "#e4eef3", "#e4eef3"], [270, "#d1e0ea", "#c2d5e3"],
  [282, "#d3e0ea", "#c1d4e2"], [294, "#e0ebf2", "#dde9f0"], [306, "#bcd2e0", "#9abad0"], [318, "#fafcfe", "#fafcfe"],
  [330, "#a5c2d5", "#82a8c3"], [342, "#fafcfe", "#fafcfe"], [354, "#b7b7b7", "#a1a1a1"], [366, "#e2e6e8", "#d8d9db"],
  [378, "#c9c9c9", "#bbbbbb"], [390, "#d0d0d0", "#bbbbbb"], [402, "#e3e5e6", "#dbdfe0"], [414, "#b4b4b4", "#9a9a9a"],
  [426, "#fafcfe", "#fafcfe"], [438, "#a0a0a0", "#7f7f7f"], [450, "#fafcfe", "#fafcfe"], [462, "#b5b5b5", "#a0a0a0"],
  [474, "#e2e3e6", "#d6d7d9"], [486, "#cccccc", "#bdbdbd"], [498, "#cccccc", "#bdbdbd"],
];

const agentBands: Band[] = [
  [244, 2, [[995, 36, "#dbe8ef"]]],
  [246, 12, [[995, 15, "#b5cddd"], [1010, 12, "#9dbcd3"], [1022, 9, "#a6c3d7"]]],
  [258, 12, [[995, 36, "#ebf1f7"]]],
  [298, 8, [[989, 9, "#eef4f8"], [998, 31, "#dbe8ef"]]],
  [306, 12, [[989, 9, "#eef4f8"], [998, 12, "#b9d0df"], [1010, 12, "#a7c4d8"], [1022, 7, "#c0d4e1"]]],
  [438, 12, [[994, 16, "#a4a4a5"], [1010, 12, "#8a8a8a"], [1022, 12, "#afafaf"]]],
  [462, 12, [[994, 4, "#eeeeee"], [998, 12, "#b3b3b3"], [1010, 12, "#969696"], [1022, 12, "#bbbbbb"]]],
  [474, 12, [[994, 40, "#eaebed"]]],
  [486, 12, [[994, 4, "#eeeeee"], [998, 12, "#cecece"], [1010, 12, "#bababa"], [1022, 12, "#d0d0d0"]]],
  [498, 12, [[994, 16, "#d5d5d6"], [1010, 12, "#c6c6c6"], [1022, 12, "#dcdcdc"]]],
];

function Bands({ bands }: { bands: Band[] }) {
  return (
    <>
      {bands.map(([y, h, cells]) =>
        cells.map(([x, w, c]) => <rect key={`${x}-${y}`} x={x} y={y} width={w} height={h} fill={c} />)
      )}
    </>
  );
}

function PrivacyMask() {
  return (
    <svg
      viewBox="142 212 1205 300"
      preserveAspectRatio="none"
      shapeRendering="crispEdges"
      className="pointer-events-none absolute inset-0 h-full w-full"
      aria-hidden="true"
    >
      <defs>
        <clipPath id="person-clip">
          {personBlobs.map(([x, y, w, h, r]) => (
            <rect key={`${x}-${y}`} x={x} y={y} width={w} height={h} rx={r} />
          ))}
        </clipPath>
        <clipPath id="school-clip">
          <path d="M574 252 Q580 234 594 234 Q608 236 607 252 L605 284 Q602 305 600 322 L598 334 L602 352 L607 385 L609 420 V460 L611 465 L608 490 Q604 506 594 506 Q588 506 587 503 Q580 506 572 503 Q566 500 566 490 L565 380 L563 340 L564 262 Z" />
        </clipPath>
        <clipPath id="agent-clip">
          <rect x="995" y="244" width="36" height="25" rx="11" />
          <rect x="989" y="298" width="40" height="24" rx="11" />
          <rect x="994" y="428" width="24" height="20" rx="10" />
          <path d="M994 438 H1024 Q1034 440 1034 450 V496 Q1032 508 1018 508 L1012 505 Q1006 509 1000 507 Q993 504 994 490 Z" />
        </clipPath>
        <clipPath id="advisor-clip">
          <path d="M1188 250 Q1190 240 1201 240 Q1212 242 1212 252 L1214 300 L1216 350 L1217 490 Q1220 508 1210 512 H1198 Q1193 504 1192 490 L1193 380 L1190 300 Z" />
        </clipPath>
      </defs>
      <g clipPath="url(#person-clip)">
        <rect x="300" y="235" width="245" height="277" fill="#fbfdfe" />
        <Bands bands={personBands} />
      </g>
      <g clipPath="url(#school-clip)">
        <rect x="560" y="232" width="55" height="280" fill="#fafcfe" />
        {schoolBands.map(([y, a, b, c, d]) => (
          <g key={y}>
            <rect x="566" y={y} width="12" height="12" fill={a} />
            <rect x="578" y={y} width="12" height="12" fill={b} />
            <rect x="590" y={y} width="12" height="12" fill={c} />
            <rect x="602" y={y} width="12" height="12" fill={d} />
          </g>
        ))}
      </g>
      <g clipPath="url(#agent-clip)">
        <rect x="985" y="240" width="55" height="272" fill="#fafcfe" />
        <Bands bands={agentBands} />
      </g>
      <g clipPath="url(#advisor-clip)">
        <rect x="1185" y="240" width="35" height="272" fill="#f2f4f5" />
        {advisorBands.map(([y, a, b]) => (
          <g key={y}>
            <rect x="1188" y={y} width="14" height="12" fill={a} />
            <rect x="1202" y={y} width="12" height="12" fill={b} />
          </g>
        ))}
      </g>
    </svg>
  );
}

const TD = "h-[27px] border border-[#c4dfec] p-0 text-center whitespace-pre";

function CheckCell({ label }: { label: string }) {
  return (
    <span className="flex justify-center pb-0.5">
      <input type="checkbox" aria-label={label} className={CHECKBOX} />
    </span>
  );
}

function CustomerTable() {
  return (
    <div className="relative mr-[3px]">
      <table className="w-full table-fixed border-collapse text-xs leading-[14px]">
        <colgroup>
          <col className="w-[54px]" />
          {columns.map(([label, width]) => (
            <col key={label} className={width} />
          ))}
        </colgroup>
        <thead>
          <tr className="bg-[#eaf3fa] text-[#0b568c]">
            <th className={TD}>
              <CheckCell label="全选" />
            </th>
            {columns.map(([label, , sort]) => (
              <th key={label} className={`${TD} relative text-[13px] font-bold`}>
                {label}
                <svg viewBox="0 0 8 10" className="absolute top-2 right-[7px] h-2.5 w-2" aria-hidden="true">
                  {sort === "both" ? (
                    <path d="M0 4.500 L4 0 L8 4.500 Z M0 5.500 L4 10 L8 5.500 Z" fill="#2b2b2b" />
                  ) : (
                    <path d="M0 7 L4 3 L8 7 Z" fill="#2b2b2b" />
                  )}
                </svg>
              </th>
            ))}
          </tr>
        </thead>
        <tbody>
          {rows.map((r, i) => (
            <tr key={r.id} className={`bg-white ${i < 4 ? "text-[#0b568c]" : "text-black"}`}>
              <td className={TD}>
                <CheckCell label={`选择 ${r.id}`} />
              </td>
              <td className={`${TD} ${MONO}`}>{r.id}</td>
              <td className={TD}>
                <span className="flex items-center justify-center gap-1">
                  <PersonIcon color={r.color} />
                  {r.name}
                </span>
              </td>
              <td className={TD}>{r.contact}</td>
              <td className={`${TD} ${MONO}`}>{r.phone}</td>
              <td className={TD}>{r.school}</td>
              <td className={TD}>{r.source}</td>
              <td className={`${TD} ${MONO}`}>{r.last}</td>
              <td className={i === 0 ? "border border-[#c4dfec] p-0 text-center" : `${TD} ${MONO}`}>{r.note}</td>
              <td className={TD}>{r.agent}</td>
              <td className={`${TD} ${MONO}`}>{r.collected}</td>
              <td className={TD}>{i < 4 ? "李道勤" : "李　　"}</td>
              <td className={`${TD} ${MONO}`}>{r.assigned}</td>
            </tr>
          ))}
        </tbody>
      </table>
      <PrivacyMask />
    </div>
  );
}

/* ---------- pager ---------- */

function PagerButton({ label, path, dim }: { label: string; path: string; dim?: boolean }) {
  return (
    <button aria-label={label} className="flex h-[26px] w-7 items-center justify-center">
      <svg viewBox="0 0 12 12" className="size-3" aria-hidden="true">
        <path d={path} fill={dim ? "#83c2f0" : "#1b8fe6"} />
      </svg>
    </button>
  );
}

function Pager() {
  const num = "h-[26px] w-[26px] rounded text-[13px] font-['Open_Sans',sans-serif]";
  const rule = "h-6 w-px bg-[#c9cdd0]";
  const total = "font-['Open_Sans',sans-serif] text-[13px] text-[#ff0018]";
  return (
    <div className="mt-2.5 flex h-8 items-center border border-[#d8dcdf] text-xs text-[#0b5a93]">
      <PagerButton dim label="首页" path="M1 1 H3 V11 H1 Z M10.500 1 V11 L4 6 Z" />
      <PagerButton dim label="上一页" path="M9 1 V11 L3 6 Z" />
      <PagerButton label="下一页" path="M3 0 V12 L10 6 Z" />
      <PagerButton label="末页" path="M1.500 1 L8 6 L1.500 11 Z M9 1 H11 V11 H9 Z" />
      <span className={`ml-px ${rule}`} />
      <button className={`ml-0.5 bg-[#dcdcdc] text-[#8a6a30] ${num}`}>1</button>
      <button className={`text-[#2b4a66] ${num}`}>2</button>
      <button className={`text-[#2b4a66] ${num}`}>3</button>
      <span className={`ml-px ${rule}`} />
      <label className="ml-2 flex items-center gap-0.5">
        转到
        <input defaultValue="1" className="h-7 w-[33px] border border-[#9cbce6] bg-white pl-[3px] font-['Open_Sans',sans-serif] text-[13px] text-black" />
        页
      </label>
      <span className={`ml-2 ${rule}`} />
      <button aria-label="刷新列表" className="ml-[9px]">
        <svg viewBox="0 0 12 12" className="size-3" aria-hidden="true">
          <path d="M8.500 2.800 A4.500 4.500 0 1 1 4 2.500" fill="none" stroke="#2593e2" strokeWidth="1.700" />
          <path d="M5 0 L9.500 2.500 L5 5.500 Z" fill="#2593e2" />
        </svg>
      </button>
      <p className="mr-[6px] ml-auto flex items-center gap-1">
        每页显示 <span className={total}>10</span> 条,总共 <span className={total}>25</span> 条
      </p>
    </div>
  );
}

export default function App() {
  return (
    <div className={`flex min-h-screen flex-col bg-[#ebf3fb] ${FONT}`}>
      <Header />
      <div className="flex flex-1">
        <Sidebar />
        <main className="min-w-0 flex-1">
          <Tabs />
          <div className="pr-[10px] pl-3">
            <Filters />
            <div className="mt-2">
              <Toolbar />
              <CustomerTable />
            </div>
            <Pager />
          </div>
        </main>
      </div>
      <footer className="h-1.5 border-t border-[#1b93cf] bg-[#38b1ec]" />
    </div>
  );
}
